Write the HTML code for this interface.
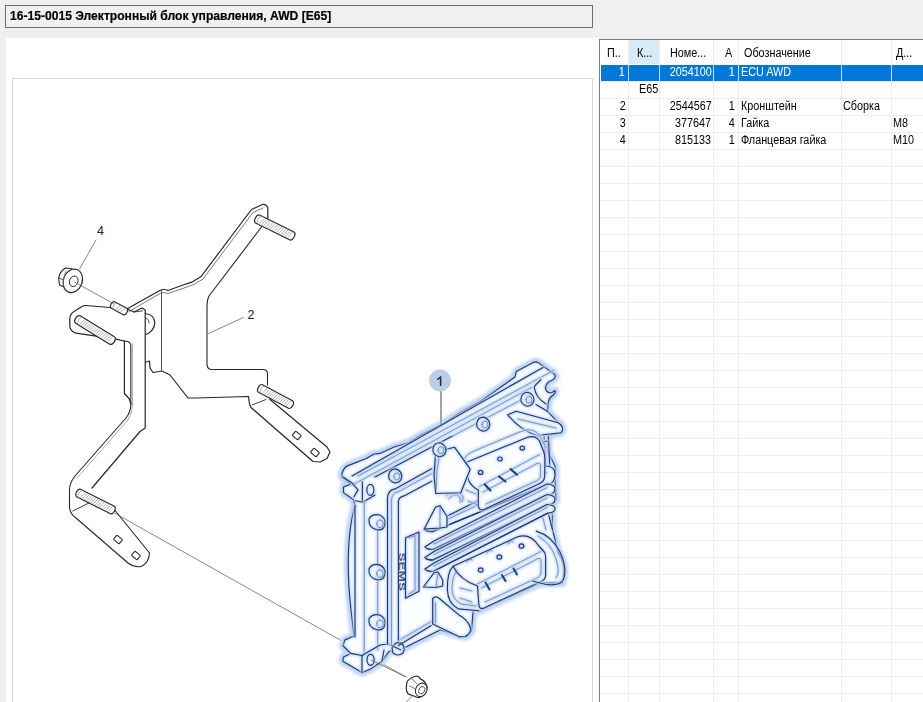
<!DOCTYPE html>
<html><head><meta charset="utf-8">
<style>
html,body{margin:0;padding:0;}
body{width:923px;height:702px;overflow:hidden;background:#f0f0f0;position:relative;font-family:"Liberation Sans",sans-serif;}
.abs{position:absolute;}
#title{left:5px;top:5px;width:582px;height:21px;border:1px solid #6e6e6e;background:#f0f0f0;font-weight:bold;font-size:12.5px;line-height:20.5px;padding-left:4px;-webkit-text-stroke:0.2px #000;color:#000;white-space:nowrap;}
#left{left:6px;top:38px;width:593px;height:664px;background:#fff;}
#inner{left:12px;top:78px;width:579px;height:630px;border:1px solid #d8d8d8;background:#fff;}
#grid{left:599px;top:39px;width:330px;height:670px;background:#fff;border-left:1px solid #7c7c7c;border-top:1px solid #7c7c7c;}
svg{position:absolute;left:0;top:0;}
.t{position:absolute;font-size:12px;color:#000;white-space:nowrap;transform:scaleX(0.9);}
</style></head><body>
<div id="title" class="abs"><span style="display:inline-block;transform:scaleX(0.968);transform-origin:0 50%;">16-15-0015 Электронный блок управления, AWD [E65]</span></div>
<div id="left" class="abs"></div>
<div id="inner" class="abs"></div>
<div id="grid" class="abs"></div>
<svg width="923" height="702" viewBox="0 0 923 702">
<rect x="629" y="40" width="30" height="24" fill="#d9ebf9"/>
<rect x="601" y="65" width="322" height="16" fill="#0078d7"/>
<g stroke="#ededed" stroke-width="1" shape-rendering="crispEdges">
<line x1="628.5" y1="40" x2="628.5" y2="702" />
<line x1="659.5" y1="40" x2="659.5" y2="702" />
<line x1="713.5" y1="40" x2="713.5" y2="702" />
<line x1="738.5" y1="40" x2="738.5" y2="702" />
<line x1="841.5" y1="40" x2="841.5" y2="702" />
<line x1="891.5" y1="40" x2="891.5" y2="702" />
<line x1="600" y1="81.5" x2="923" y2="81.5" />
<line x1="600" y1="98.5" x2="923" y2="98.5" />
<line x1="600" y1="115.5" x2="923" y2="115.5" />
<line x1="600" y1="132.5" x2="923" y2="132.5" />
<line x1="600" y1="149.5" x2="923" y2="149.5" />
<line x1="600" y1="166.5" x2="923" y2="166.5" />
<line x1="600" y1="183.5" x2="923" y2="183.5" />
<line x1="600" y1="200.5" x2="923" y2="200.5" />
<line x1="600" y1="217.5" x2="923" y2="217.5" />
<line x1="600" y1="234.5" x2="923" y2="234.5" />
<line x1="600" y1="251.5" x2="923" y2="251.5" />
<line x1="600" y1="268.5" x2="923" y2="268.5" />
<line x1="600" y1="285.5" x2="923" y2="285.5" />
<line x1="600" y1="302.5" x2="923" y2="302.5" />
<line x1="600" y1="319.5" x2="923" y2="319.5" />
<line x1="600" y1="336.5" x2="923" y2="336.5" />
<line x1="600" y1="353.5" x2="923" y2="353.5" />
<line x1="600" y1="370.5" x2="923" y2="370.5" />
<line x1="600" y1="387.5" x2="923" y2="387.5" />
<line x1="600" y1="404.5" x2="923" y2="404.5" />
<line x1="600" y1="421.5" x2="923" y2="421.5" />
<line x1="600" y1="438.5" x2="923" y2="438.5" />
<line x1="600" y1="455.5" x2="923" y2="455.5" />
<line x1="600" y1="472.5" x2="923" y2="472.5" />
<line x1="600" y1="489.5" x2="923" y2="489.5" />
<line x1="600" y1="506.5" x2="923" y2="506.5" />
<line x1="600" y1="523.5" x2="923" y2="523.5" />
<line x1="600" y1="540.5" x2="923" y2="540.5" />
<line x1="600" y1="557.5" x2="923" y2="557.5" />
<line x1="600" y1="574.5" x2="923" y2="574.5" />
<line x1="600" y1="591.5" x2="923" y2="591.5" />
<line x1="600" y1="608.5" x2="923" y2="608.5" />
<line x1="600" y1="625.5" x2="923" y2="625.5" />
<line x1="600" y1="642.5" x2="923" y2="642.5" />
<line x1="600" y1="659.5" x2="923" y2="659.5" />
<line x1="600" y1="676.5" x2="923" y2="676.5" />
<line x1="600" y1="693.5" x2="923" y2="693.5" />
</g>
<g stroke="#bfe0fb" stroke-width="1" shape-rendering="crispEdges">
<line x1="628.5" y1="65" x2="628.5" y2="81"/>
<line x1="659.5" y1="65" x2="659.5" y2="81"/>
<line x1="713.5" y1="65" x2="713.5" y2="81"/>
<line x1="738.5" y1="65" x2="738.5" y2="81"/>
<line x1="841.5" y1="65" x2="841.5" y2="81"/>
<line x1="891.5" y1="65" x2="891.5" y2="81"/>
</g>
<path d="M127,309 L140,301.5 L160,290.5 Q164,288.5 168,290.5 L183,285 Q188,283 192.6,281.8 L201.2,276.4 L251.5,209.5 L262.5,204.5 Q266,203.5 267.8,207.5 L267.8,219" stroke="#262626" stroke-width="1.2" fill="none" stroke-linejoin="round" stroke-linecap="round" />
<path d="M129,311.5 L141,304.5 L160,293.5 Q164,291.5 168,293.5 L184,288 Q189,286 194,284.5 L203,279 L253,212.5 L263,208" stroke="#555" stroke-width="0.8" fill="none" stroke-linejoin="round" stroke-linecap="round" />
<path d="M263,225 L209,296 Q207,300 207,305 L207,364 Q207,369.5 212,369.5 L263,369.5 Q267.5,369.5 267.5,374 L267.5,385" stroke="#262626" stroke-width="1.1" fill="none" stroke-linejoin="round" stroke-linecap="round" />
<path d="M267.5,394.0 L270.0,399.5 L327.0,447.0 L330.0,452.0 L327.0,458.5 L320.0,462.0 L313.0,461.5 L251.0,407.5 L249.5,404.0 L248.5,396.5 L196.0,398.0 L188.0,398.0 L170.0,375.0 L162.0,371.0 L153.0,372.5 L150.0,368.0 L149.5,361.0 L146.0,362.0" stroke="#262626" stroke-width="1.2100000000000002" fill="none" stroke-linejoin="round" stroke-linecap="round" />
<path d="M252.0,405.0 L266.0,399.5" stroke="#262626" stroke-width="0.9" fill="none" stroke-linejoin="round" stroke-linecap="round" />
<path d="M161.5,290.0 L161.5,371.0" stroke="#444" stroke-width="0.9" fill="none" stroke-linejoin="round" stroke-linecap="round" />
<rect x="293.09999999999997" y="432.7" width="7.2" height="5.6" rx="0.8" transform="rotate(40 296.7 435.5)" stroke="#262626" stroke-width="1.1" fill="#fff"/>
<rect x="311.4" y="449.7" width="7.2" height="5.6" rx="0.8" transform="rotate(40 315 452.5)" stroke="#262626" stroke-width="1.1" fill="#fff"/>
<path d="M124,341 L114.8,338.9 L94.6,335.9 L76,333.2 Q70,331 69.8,326 L69.8,318 Q70.5,313.5 74,311.5 L82,306.5 Q84,305.4 86,305.5 L127,309 L134,312 L142,308 L145.2,310 L145.2,428 L140,431.5 L92,488" stroke="#262626" stroke-width="1.2" fill="none" stroke-linejoin="round" stroke-linecap="round" />
<path d="M134.0,312.0 L142.5,311.0" stroke="#262626" stroke-width="0.8" fill="none" stroke-linejoin="round" stroke-linecap="round" />
<path d="M124.4,341.0 L124.4,393.5 L129.0,398.5 L131.0,404.0" stroke="#262626" stroke-width="1.2100000000000002" fill="none" stroke-linejoin="round" stroke-linecap="round" />
<path d="M124,341 L128,341.5 Q130.5,342.5 130.8,345 L130.8,404 Q130.8,412 126,418 L75,476 Q69.5,483 69.5,490 L69.5,507 Q70,514 76,518 L128,563 Q134,567.5 141,566.5 Q149,563 149.5,553 L114.7,510" stroke="#262626" stroke-width="1.1" fill="none" stroke-linejoin="round" stroke-linecap="round" />
<path d="M132.5,344 L132.5,405 Q132.5,413 128,420 L77,478" stroke="#888" stroke-width="0.7" fill="none" stroke-linejoin="round" stroke-linecap="round" />
<path d="M72.8,511.0 L89.0,503.0" stroke="#262626" stroke-width="0.9" fill="none" stroke-linejoin="round" stroke-linecap="round" />
<path d="M145.5,313.5 Q154.5,315 154.8,322.5 Q154.5,331 146,334.5" stroke="#262626" stroke-width="1.2" fill="none" stroke-linejoin="round" stroke-linecap="round" />
<path d="M145.5,318 Q149,318.5 149,323" stroke="#262626" stroke-width="0.8" fill="none" stroke-linejoin="round" stroke-linecap="round" />
<rect x="114.4" y="536.7" width="7.2" height="5.6" rx="0.8" transform="rotate(40 118 539.5)" stroke="#262626" stroke-width="1.1" fill="#fff"/>
<rect x="132.4" y="552.7" width="7.2" height="5.6" rx="0.8" transform="rotate(40 136 555.5)" stroke="#262626" stroke-width="1.1" fill="#fff"/>
<path d="M255.5,223.0 L290.0,240.0 A2.7,4.5 26.2 0 0 294.0,232.0 L259.5,215.0 A2.7,4.5 26.2 0 0 255.5,223.0 Z" stroke="#2a2a2a" stroke-width="1.2" fill="#fff" stroke-linejoin="round" stroke-linecap="round" />
<path d="M258.4,224.5 A2.7,4.5 26.2 0 1 262.4,216.4" stroke="#888" stroke-width="0.7" fill="none" stroke-linejoin="round" stroke-linecap="round" />
<line x1="259.4" y1="223.7" x2="264.2" y2="218.5" stroke="#929292" stroke-width="0.75"/>
<line x1="261.6" y1="224.8" x2="266.4" y2="219.6" stroke="#929292" stroke-width="0.75"/>
<line x1="263.7" y1="225.9" x2="268.5" y2="220.6" stroke="#929292" stroke-width="0.75"/>
<line x1="265.9" y1="226.9" x2="270.7" y2="221.7" stroke="#929292" stroke-width="0.75"/>
<line x1="268.0" y1="228.0" x2="272.8" y2="222.8" stroke="#929292" stroke-width="0.75"/>
<line x1="270.2" y1="229.0" x2="275.0" y2="223.8" stroke="#929292" stroke-width="0.75"/>
<line x1="272.4" y1="230.1" x2="277.1" y2="224.9" stroke="#929292" stroke-width="0.75"/>
<line x1="274.5" y1="231.2" x2="279.3" y2="226.0" stroke="#929292" stroke-width="0.75"/>
<line x1="276.7" y1="232.2" x2="281.5" y2="227.0" stroke="#929292" stroke-width="0.75"/>
<line x1="278.8" y1="233.3" x2="283.6" y2="228.1" stroke="#929292" stroke-width="0.75"/>
<line x1="281.0" y1="234.4" x2="285.8" y2="229.1" stroke="#929292" stroke-width="0.75"/>
<line x1="283.1" y1="235.4" x2="287.9" y2="230.2" stroke="#929292" stroke-width="0.75"/>
<line x1="285.3" y1="236.5" x2="290.1" y2="231.3" stroke="#929292" stroke-width="0.75"/>
<line x1="287.4" y1="237.5" x2="292.2" y2="232.3" stroke="#929292" stroke-width="0.75"/>
<path d="M258.5,392.3 L288.5,408.3 A2.6,4.3 28.1 0 0 292.5,400.7 L262.5,384.7 A2.6,4.3 28.1 0 0 258.5,392.3 Z" stroke="#2a2a2a" stroke-width="1.2" fill="#fff" stroke-linejoin="round" stroke-linecap="round" />
<path d="M261.2,393.8 A2.6,4.3 28.1 0 1 265.3,386.2" stroke="#888" stroke-width="0.7" fill="none" stroke-linejoin="round" stroke-linecap="round" />
<line x1="262.4" y1="393.1" x2="267.2" y2="388.4" stroke="#929292" stroke-width="0.75"/>
<line x1="264.5" y1="394.3" x2="269.3" y2="389.6" stroke="#929292" stroke-width="0.75"/>
<line x1="266.7" y1="395.4" x2="271.5" y2="390.7" stroke="#929292" stroke-width="0.75"/>
<line x1="268.8" y1="396.6" x2="273.6" y2="391.9" stroke="#929292" stroke-width="0.75"/>
<line x1="271.0" y1="397.7" x2="275.7" y2="393.0" stroke="#929292" stroke-width="0.75"/>
<line x1="273.1" y1="398.9" x2="277.9" y2="394.1" stroke="#929292" stroke-width="0.75"/>
<line x1="275.3" y1="400.0" x2="280.0" y2="395.3" stroke="#929292" stroke-width="0.75"/>
<line x1="277.4" y1="401.1" x2="282.2" y2="396.4" stroke="#929292" stroke-width="0.75"/>
<line x1="279.5" y1="402.3" x2="284.3" y2="397.6" stroke="#929292" stroke-width="0.75"/>
<line x1="281.7" y1="403.4" x2="286.5" y2="398.7" stroke="#929292" stroke-width="0.75"/>
<line x1="283.8" y1="404.6" x2="288.6" y2="399.9" stroke="#929292" stroke-width="0.75"/>
<line x1="286.0" y1="405.7" x2="290.7" y2="401.0" stroke="#929292" stroke-width="0.75"/>
<path d="M75.7,323.2 L109.7,344.2 A2.6,4.3 31.7 0 0 114.3,336.8 L80.3,315.8 A2.6,4.3 31.7 0 0 75.7,323.2 Z" stroke="#2a2a2a" stroke-width="1.2" fill="#fff" stroke-linejoin="round" stroke-linecap="round" />
<path d="M78.4,324.8 A2.6,4.3 31.7 0 1 82.9,317.5" stroke="#888" stroke-width="0.7" fill="none" stroke-linejoin="round" stroke-linecap="round" />
<line x1="79.5" y1="324.2" x2="84.5" y2="319.8" stroke="#929292" stroke-width="0.75"/>
<line x1="81.5" y1="325.4" x2="86.5" y2="321.0" stroke="#929292" stroke-width="0.75"/>
<line x1="83.5" y1="326.6" x2="88.5" y2="322.2" stroke="#929292" stroke-width="0.75"/>
<line x1="85.5" y1="327.9" x2="90.5" y2="323.5" stroke="#929292" stroke-width="0.75"/>
<line x1="87.5" y1="329.1" x2="92.5" y2="324.7" stroke="#929292" stroke-width="0.75"/>
<line x1="89.5" y1="330.3" x2="94.5" y2="325.9" stroke="#929292" stroke-width="0.75"/>
<line x1="91.5" y1="331.6" x2="96.5" y2="327.2" stroke="#929292" stroke-width="0.75"/>
<line x1="93.5" y1="332.8" x2="98.5" y2="328.4" stroke="#929292" stroke-width="0.75"/>
<line x1="95.5" y1="334.1" x2="100.5" y2="329.7" stroke="#929292" stroke-width="0.75"/>
<line x1="97.5" y1="335.3" x2="102.5" y2="330.9" stroke="#929292" stroke-width="0.75"/>
<line x1="99.5" y1="336.5" x2="104.5" y2="332.1" stroke="#929292" stroke-width="0.75"/>
<line x1="101.5" y1="337.8" x2="106.5" y2="333.4" stroke="#929292" stroke-width="0.75"/>
<line x1="103.5" y1="339.0" x2="108.5" y2="334.6" stroke="#929292" stroke-width="0.75"/>
<line x1="105.5" y1="340.2" x2="110.5" y2="335.8" stroke="#929292" stroke-width="0.75"/>
<line x1="107.5" y1="341.5" x2="112.5" y2="337.1" stroke="#929292" stroke-width="0.75"/>
<path d="M76.6,496.8 L110.6,513.8 A2.6,4.3 26.6 0 0 114.4,506.2 L80.4,489.2 A2.6,4.3 26.6 0 0 76.6,496.8 Z" stroke="#2a2a2a" stroke-width="1.2" fill="#fff" stroke-linejoin="round" stroke-linecap="round" />
<path d="M79.3,498.2 A2.6,4.3 26.6 0 1 83.2,490.5" stroke="#888" stroke-width="0.7" fill="none" stroke-linejoin="round" stroke-linecap="round" />
<line x1="80.4" y1="497.5" x2="85.1" y2="492.7" stroke="#929292" stroke-width="0.75"/>
<line x1="82.5" y1="498.6" x2="87.2" y2="493.8" stroke="#929292" stroke-width="0.75"/>
<line x1="84.7" y1="499.7" x2="89.3" y2="494.8" stroke="#929292" stroke-width="0.75"/>
<line x1="86.8" y1="500.7" x2="91.5" y2="495.9" stroke="#929292" stroke-width="0.75"/>
<line x1="88.9" y1="501.8" x2="93.6" y2="497.0" stroke="#929292" stroke-width="0.75"/>
<line x1="91.0" y1="502.9" x2="95.7" y2="498.0" stroke="#929292" stroke-width="0.75"/>
<line x1="93.2" y1="503.9" x2="97.8" y2="499.1" stroke="#929292" stroke-width="0.75"/>
<line x1="95.3" y1="505.0" x2="100.0" y2="500.1" stroke="#929292" stroke-width="0.75"/>
<line x1="97.4" y1="506.0" x2="102.1" y2="501.2" stroke="#929292" stroke-width="0.75"/>
<line x1="99.5" y1="507.1" x2="104.2" y2="502.3" stroke="#929292" stroke-width="0.75"/>
<line x1="101.7" y1="508.2" x2="106.3" y2="503.3" stroke="#929292" stroke-width="0.75"/>
<line x1="103.8" y1="509.2" x2="108.5" y2="504.4" stroke="#929292" stroke-width="0.75"/>
<line x1="105.9" y1="510.3" x2="110.6" y2="505.5" stroke="#929292" stroke-width="0.75"/>
<line x1="108.0" y1="511.4" x2="112.7" y2="506.5" stroke="#929292" stroke-width="0.75"/>
<path d="M111.3,308.2 L123.3,314.7 A2.2,3.6 28.4 0 0 126.7,308.3 L114.7,301.8 A2.2,3.6 28.4 0 0 111.3,308.2 Z" stroke="#2a2a2a" stroke-width="1.2" fill="#fff" stroke-linejoin="round" stroke-linecap="round" />
<path d="M113.6,309.4 A2.2,3.6 28.4 0 1 117.0,303.1" stroke="#888" stroke-width="0.7" fill="none" stroke-linejoin="round" stroke-linecap="round" />
<line x1="115.7" y1="309.3" x2="119.9" y2="305.9" stroke="#929292" stroke-width="0.75"/>
<line x1="118.1" y1="310.6" x2="122.3" y2="307.2" stroke="#929292" stroke-width="0.75"/>
<line x1="120.5" y1="311.9" x2="124.7" y2="308.5" stroke="#929292" stroke-width="0.75"/>
<path d="M72,268.8 L65.5,268 Q60,271 58.7,278 L59.5,285 L63,286.5" stroke="#262626" stroke-width="1.1" fill="#fff" stroke-linejoin="round" stroke-linecap="round" />
<path d="M58.7,278.0 L64.0,280.0" stroke="#262626" stroke-width="0.8" fill="none" stroke-linejoin="round" stroke-linecap="round" />
<ellipse cx="72.8" cy="280.8" rx="9.4" ry="12" transform="rotate(20 72.8 280.8)" stroke="#2a2a2a" stroke-width="1.2" fill="#fff"/>
<ellipse cx="73.7" cy="281.3" rx="4.2" ry="5.4" transform="rotate(20 73.7 281.3)" stroke="#2a2a2a" stroke-width="0.9" fill="none"/>
<path d="M66,271 Q62,279 64,288" stroke="#666" stroke-width="0.7" fill="none" stroke-linejoin="round" stroke-linecap="round" />
<path d="M74.5,282.0 L114.0,304.0" stroke="#555" stroke-width="0.7" fill="none" stroke-linejoin="round" stroke-linecap="round" />
<path d="M79.5,269.0 L96.0,240.0" stroke="#555" stroke-width="0.7" fill="none" stroke-linejoin="round" stroke-linecap="round" />
<path d="M208.5,333.5 L243.5,317.5" stroke="#555" stroke-width="0.7" fill="none" stroke-linejoin="round" stroke-linecap="round" />
<path d="M113.5,512.5 L406.0,677.0" stroke="#555" stroke-width="0.7" fill="none" stroke-linejoin="round" stroke-linecap="round" />
<path d="M441.0,391.0 L441.0,425.0" stroke="#555" stroke-width="0.7" fill="none" stroke-linejoin="round" stroke-linecap="round" />
<text x="100.5" y="235" font-size="12.5" text-anchor="middle" fill="#222" font-family="Liberation Sans">4</text>
<text x="251" y="318.5" font-size="12.5" text-anchor="middle" fill="#222" font-family="Liberation Sans">2</text>
<filter id="glw" x="-20%" y="-20%" width="140%" height="140%"><feGaussianBlur stdDeviation="1.6"/></filter>
<filter id="glw2" x="-20%" y="-20%" width="140%" height="140%"><feGaussianBlur stdDeviation="0.8"/></filter>
<path d="M342,477 L342,473.5 Q344,467 348,465.6 L366.3,458.5 L373.5,454.2 L380,453.4 L394.2,447 L408.5,442.7 L422.7,434.1 L441.3,424.9 L460,412.7 L480,401.4 L492.8,392.8 L514.9,377 L516.3,371.4 L534.1,362.1 L537.7,362.1 L554.8,374.5 Q556.5,377 553,379.8 L548.5,382 Q543.5,386.5 546.6,391 Q549,393.5 552,392.5 L555,390.5 Q556.5,393 551.3,396.5 Q548,399.5 547.9,406.3 L547.5,411.3 L558.3,422.7 Q565,427 561.2,432.7 L548,435.5 L548,452 L555,466 Q556,472 555,478 L556,500 L552,506 L552.6,530 L558.5,553.3 Q567,566 562.2,583 L540,583 L478.9,610.7 L473.3,608.9 L471.5,631 L466,636.7 L456.7,634.8 L440,630 L400.5,649.8 L389.1,651.3 L382,661.2 L370.6,669 L362,672.6 L342.8,661.2 L343.5,657 L350.7,653.4 L342.8,645.6 L345,639.9 L354,636 L351,610 Q345,556 352,518 L355,505.5 L353.5,499.8 L343.5,492.6 L343.5,487 L350.7,484.1 Z" fill="#fff" stroke="#bcd4f4" stroke-width="8" stroke-linejoin="round" filter="url(#glw)"/>
<path d="M342,477 L342,473.5 Q344,467 348,465.6 L366.3,458.5 L373.5,454.2 L380,453.4 L394.2,447 L408.5,442.7 L422.7,434.1 L441.3,424.9 L460,412.7 L480,401.4 L492.8,392.8 L514.9,377 L516.3,371.4 L534.1,362.1 L537.7,362.1 L554.8,374.5 Q556.5,377 553,379.8 L548.5,382 Q543.5,386.5 546.6,391 Q549,393.5 552,392.5 L555,390.5 Q556.5,393 551.3,396.5 Q548,399.5 547.9,406.3 L547.5,411.3 L558.3,422.7 Q565,427 561.2,432.7 L548,435.5 L548,452 L555,466 Q556,472 555,478 L556,500 L552,506 L552.6,530 L558.5,553.3 Q567,566 562.2,583 L540,583 L478.9,610.7 L473.3,608.9 L471.5,631 L466,636.7 L456.7,634.8 L440,630 L400.5,649.8 L389.1,651.3 L382,661.2 L370.6,669 L362,672.6 L342.8,661.2 L343.5,657 L350.7,653.4 L342.8,645.6 L345,639.9 L354,636 L351,610 Q345,556 352,518 L355,505.5 L353.5,499.8 L343.5,492.6 L343.5,487 L350.7,484.1 Z" fill="#fff" stroke="none"/>
<g stroke-linejoin="round" stroke-linecap="round"><path d="M342,477 L342,473.5 Q344,467 348,465.6 L366.3,458.5 L373.5,454.2 L380,453.4 L394.2,447 L408.5,442.7 L422.7,434.1 L441.3,424.9 L460,412.7 L480,401.4 L492.8,392.8 L514.9,377 L516.3,371.4 L534.1,362.1 L537.7,362.1 L554.8,374.5 Q556.5,377 553,379.8 L548.5,382 Q543.5,386.5 546.6,391 Q549,393.5 552,392.5 L555,390.5 Q556.5,393 551.3,396.5 Q548,399.5 547.9,406.3 L547.5,411.3 L558.3,422.7 Q565,427 561.2,432.7 L548,435.5 L548,452 L555,466 Q556,472 555,478 L556,500 L552,506 L552.6,530 L558.5,553.3 Q567,566 562.2,583 L540,583 L478.9,610.7 L473.3,608.9 L471.5,631 L466,636.7 L456.7,634.8 L440,630 L400.5,649.8 L389.1,651.3 L382,661.2 L370.6,669 L362,672.6 L342.8,661.2 L343.5,657 L350.7,653.4 L342.8,645.6 L345,639.9 L354,636 L351,610 Q345,556 352,518 L355,505.5 L353.5,499.8 L343.5,492.6 L343.5,487 L350.7,484.1 Z" fill="#fbfdff" stroke="none"/><g filter="url(#glw2)"><path d="M342,477 L342,473.5 Q344,467 348,465.6 L366.3,458.5 L373.5,454.2 L380,453.4 L394.2,447 L408.5,442.7 L422.7,434.1 L441.3,424.9 L460,412.7 L480,401.4 L492.8,392.8 L514.9,377 L516.3,371.4 L534.1,362.1 L537.7,362.1 L554.8,374.5 Q556.5,377 553,379.8 L548.5,382 Q543.5,386.5 546.6,391 Q549,393.5 552,392.5 L555,390.5 Q556.5,393 551.3,396.5 Q548,399.5 547.9,406.3 L547.5,411.3 L558.3,422.7 Q565,427 561.2,432.7 L548,435.5 L548,452 L555,466 Q556,472 555,478 L556,500 L552,506 L552.6,530 L558.5,553.3 Q567,566 562.2,583 L540,583 L478.9,610.7 L473.3,608.9 L471.5,631 L466,636.7 L456.7,634.8 L440,630 L400.5,649.8 L389.1,651.3 L382,661.2 L370.6,669 L362,672.6 L342.8,661.2 L343.5,657 L350.7,653.4 L342.8,645.6 L345,639.9 L354,636 L351,610 Q345,556 352,518 L355,505.5 L353.5,499.8 L343.5,492.6 L343.5,487 L350.7,484.1 Z" fill="none" stroke="#c2d8f5" stroke-width="3.4"/></g><path d="M342,477 L342,473.5 Q344,467 348,465.6 L366.3,458.5 L373.5,454.2 L380,453.4 L394.2,447 L408.5,442.7 L422.7,434.1 L441.3,424.9 L460,412.7 L480,401.4 L492.8,392.8 L514.9,377 L516.3,371.4 L534.1,362.1 L537.7,362.1 L554.8,374.5 Q556.5,377 553,379.8 L548.5,382 Q543.5,386.5 546.6,391 Q549,393.5 552,392.5 L555,390.5 Q556.5,393 551.3,396.5 Q548,399.5 547.9,406.3 L547.5,411.3 L558.3,422.7 Q565,427 561.2,432.7 L548,435.5 L548,452 L555,466 Q556,472 555,478 L556,500 L552,506 L552.6,530 L558.5,553.3 Q567,566 562.2,583 L540,583 L478.9,610.7 L473.3,608.9 L471.5,631 L466,636.7 L456.7,634.8 L440,630 L400.5,649.8 L389.1,651.3 L382,661.2 L370.6,669 L362,672.6 L342.8,661.2 L343.5,657 L350.7,653.4 L342.8,645.6 L345,639.9 L354,636 L351,610 Q345,556 352,518 L355,505.5 L353.5,499.8 L343.5,492.6 L343.5,487 L350.7,484.1 Z" fill="none" stroke="#22386e" stroke-width="1.15"/></g>
<g stroke-linejoin="round" stroke-linecap="round"><path d="M366.9,489.9 A3.5,5.5 0 1 1 373.9,489.9 A3.5,5.5 0 1 1 366.9,489.9 Z" fill="#fbfdff" stroke="none"/><g filter="url(#glw2)"><path d="M352.0,475.9 L543.0,367.4" fill="none" stroke="#c2d8f5" stroke-width="3.4"/><path d="M375.0,476.9 L452.0,436.3" fill="none" stroke="#c2d8f5" stroke-width="3.4"/><path d="M343.0,476.9 L352.0,482.9 L358.0,489.9 L354.0,496.8" fill="none" stroke="#c2d8f5" stroke-width="3.4"/><path d="M362.4,481.9 L362.4,501.8" fill="none" stroke="#c2d8f5" stroke-width="3.4"/><path d="M355.4,500.8 L362.9,502.3 L375.0,495.0" fill="none" stroke="#c2d8f5" stroke-width="3.4"/><path d="M366.9,489.9 A3.5,5.5 0 1 1 373.9,489.9 A3.5,5.5 0 1 1 366.9,489.9 Z" fill="none" stroke="#c2d8f5" stroke-width="3.4"/><path d="M358.0,476.1 L554.0,370.2" fill="none" stroke="#c2d8f5" stroke-width="3.4"/><path d="M352.0,485.2 L532.0,387.2" fill="none" stroke="#c2d8f5" stroke-width="3.4"/><path d="M452.0,436.3 L520.0,400.5" fill="none" stroke="#c2d8f5" stroke-width="3.4"/></g><path d="M352.0,475.9 L543.0,367.4" fill="none" stroke="#22386e" stroke-width="1.15"/><path d="M375.0,476.9 L452.0,436.3" fill="none" stroke="#22386e" stroke-width="1.15"/><path d="M343.0,476.9 L352.0,482.9 L358.0,489.9 L354.0,496.8" fill="none" stroke="#22386e" stroke-width="1.15"/><path d="M362.4,481.9 L362.4,501.8" fill="none" stroke="#22386e" stroke-width="1.15"/><path d="M355.4,500.8 L362.9,502.3 L375.0,495.0" fill="none" stroke="#22386e" stroke-width="1.15"/><path d="M366.9,489.9 A3.5,5.5 0 1 1 373.9,489.9 A3.5,5.5 0 1 1 366.9,489.9 Z" fill="none" stroke="#22386e" stroke-width="1.15"/><path d="M358.0,476.1 L554.0,370.2" fill="none" stroke="#5a76b0" stroke-width="0.7"/><path d="M352.0,485.2 L532.0,387.2" fill="none" stroke="#5a76b0" stroke-width="0.7"/><path d="M452.0,436.3 L520.0,400.5" fill="none" stroke="#5a76b0" stroke-width="0.7"/></g>
<g stroke-linejoin="round" stroke-linecap="round"><path d="M369,518.8 Q372,513.8 379,514.8 Q386,517.8 385,523.8 Q384,530.8 377,529.8 Q368,527.8 369,518.8 Z" fill="#fbfdff" stroke="none"/><path d="M369,568.6 Q372,563.6 379,564.6 Q386,567.6 385,573.6 Q384,580.6 377,579.6 Q368,577.6 369,568.6 Z" fill="#fbfdff" stroke="none"/><path d="M369,618.8 Q372,613.8 379,614.8 Q386,617.8 385,623.8 Q384,630.8 377,629.8 Q368,627.8 369,618.8 Z" fill="#fbfdff" stroke="none"/><g filter="url(#glw2)"><path d="M355.0,505.5 L355.0,637.0" fill="none" stroke="#c2d8f5" stroke-width="3.4"/><path d="M369,518.8 Q372,513.8 379,514.8 Q386,517.8 385,523.8 Q384,530.8 377,529.8 Q368,527.8 369,518.8 Z" fill="none" stroke="#c2d8f5" stroke-width="3.4"/><path d="M369,568.6 Q372,563.6 379,564.6 Q386,567.6 385,573.6 Q384,580.6 377,579.6 Q368,577.6 369,568.6 Z" fill="none" stroke="#c2d8f5" stroke-width="3.4"/><path d="M369,618.8 Q372,613.8 379,614.8 Q386,617.8 385,623.8 Q384,630.8 377,629.8 Q368,627.8 369,618.8 Z" fill="none" stroke="#c2d8f5" stroke-width="3.4"/><path d="M364.2,502.0 L364.2,655.0" fill="none" stroke="#c2d8f5" stroke-width="3.4"/><path d="M377.7,530.0 L377.7,566.0" fill="none" stroke="#c2d8f5" stroke-width="3.4"/><path d="M377.7,580.0 L377.7,616.0" fill="none" stroke="#c2d8f5" stroke-width="3.4"/><path d="M377.7,630.0 L377.7,650.0" fill="none" stroke="#c2d8f5" stroke-width="3.4"/><path d="M376.8,523.8 A3.2,3.8 0 1 1 383.2,523.8 A3.2,3.8 0 1 1 376.8,523.8 Z" fill="none" stroke="#c2d8f5" stroke-width="3.4"/><path d="M376.8,573.6 A3.2,3.8 0 1 1 383.2,573.6 A3.2,3.8 0 1 1 376.8,573.6 Z" fill="none" stroke="#c2d8f5" stroke-width="3.4"/><path d="M376.8,623.8 A3.2,3.8 0 1 1 383.2,623.8 A3.2,3.8 0 1 1 376.8,623.8 Z" fill="none" stroke="#c2d8f5" stroke-width="3.4"/></g><path d="M355.0,505.5 L355.0,637.0" fill="none" stroke="#22386e" stroke-width="1.15"/><path d="M369,518.8 Q372,513.8 379,514.8 Q386,517.8 385,523.8 Q384,530.8 377,529.8 Q368,527.8 369,518.8 Z" fill="none" stroke="#22386e" stroke-width="1.15"/><path d="M369,568.6 Q372,563.6 379,564.6 Q386,567.6 385,573.6 Q384,580.6 377,579.6 Q368,577.6 369,568.6 Z" fill="none" stroke="#22386e" stroke-width="1.15"/><path d="M369,618.8 Q372,613.8 379,614.8 Q386,617.8 385,623.8 Q384,630.8 377,629.8 Q368,627.8 369,618.8 Z" fill="none" stroke="#22386e" stroke-width="1.15"/><path d="M364.2,502.0 L364.2,655.0" fill="none" stroke="#5a76b0" stroke-width="0.7"/><path d="M377.7,530.0 L377.7,566.0" fill="none" stroke="#5a76b0" stroke-width="0.7"/><path d="M377.7,580.0 L377.7,616.0" fill="none" stroke="#5a76b0" stroke-width="0.7"/><path d="M377.7,630.0 L377.7,650.0" fill="none" stroke="#5a76b0" stroke-width="0.7"/><path d="M376.8,523.8 A3.2,3.8 0 1 1 383.2,523.8 A3.2,3.8 0 1 1 376.8,523.8 Z" fill="none" stroke="#5a76b0" stroke-width="0.7"/><path d="M376.8,573.6 A3.2,3.8 0 1 1 383.2,573.6 A3.2,3.8 0 1 1 376.8,573.6 Z" fill="none" stroke="#5a76b0" stroke-width="0.7"/><path d="M376.8,623.8 A3.2,3.8 0 1 1 383.2,623.8 A3.2,3.8 0 1 1 376.8,623.8 Z" fill="none" stroke="#5a76b0" stroke-width="0.7"/></g>
<g stroke-linejoin="round" stroke-linecap="round"><path d="M367.0,659.8 A3.6,5.5 0 1 1 374.2,659.8 A3.6,5.5 0 1 1 367.0,659.8 Z" fill="#fbfdff" stroke="none"/><path d="M392,648 Q395,641 401,643 Q406,647 403,653 Q398,657 393,653 Z" fill="#fbfdff" stroke="none"/><g filter="url(#glw2)"><path d="M342.8,645.6 L350.7,653.4 L362.0,655.5 L362.0,672.6" fill="none" stroke="#c2d8f5" stroke-width="3.4"/><path d="M362.0,655.5 L380.0,645.0 L388.4,644.0" fill="none" stroke="#c2d8f5" stroke-width="3.4"/><path d="M367.0,659.8 A3.6,5.5 0 1 1 374.2,659.8 A3.6,5.5 0 1 1 367.0,659.8 Z" fill="none" stroke="#c2d8f5" stroke-width="3.4"/><path d="M388.4,644.0 L400.5,649.8" fill="none" stroke="#c2d8f5" stroke-width="3.4"/><path d="M398.5,645.5 L431.3,625.5" fill="none" stroke="#c2d8f5" stroke-width="3.4"/><path d="M392,648 Q395,641 401,643 Q406,647 403,653 Q398,657 393,653 Z" fill="none" stroke="#c2d8f5" stroke-width="3.4"/><path d="M382.0,661.2 L384.0,650.0" fill="none" stroke="#c2d8f5" stroke-width="3.4"/><path d="M397.7,641.0 L432.0,621.0" fill="none" stroke="#c2d8f5" stroke-width="3.4"/></g><path d="M342.8,645.6 L350.7,653.4 L362.0,655.5 L362.0,672.6" fill="none" stroke="#22386e" stroke-width="1.15"/><path d="M362.0,655.5 L380.0,645.0 L388.4,644.0" fill="none" stroke="#22386e" stroke-width="1.15"/><path d="M367.0,659.8 A3.6,5.5 0 1 1 374.2,659.8 A3.6,5.5 0 1 1 367.0,659.8 Z" fill="none" stroke="#22386e" stroke-width="1.15"/><path d="M388.4,644.0 L400.5,649.8" fill="none" stroke="#22386e" stroke-width="1.15"/><path d="M398.5,645.5 L431.3,625.5" fill="none" stroke="#22386e" stroke-width="1.15"/><path d="M392,648 Q395,641 401,643 Q406,647 403,653 Q398,657 393,653 Z" fill="none" stroke="#22386e" stroke-width="1.15"/><path d="M382.0,661.2 L384.0,650.0" fill="none" stroke="#22386e" stroke-width="1.15"/><path d="M397.7,641.0 L432.0,621.0" fill="none" stroke="#5a76b0" stroke-width="0.7"/></g>
<g stroke-linejoin="round" stroke-linecap="round"><g filter="url(#glw2)"><path d="M544.0,436.0 L545.5,468.0" fill="none" stroke="#c2d8f5" stroke-width="3.4"/><path d="M548.4,436.0 L549.8,468.0" fill="none" stroke="#c2d8f5" stroke-width="3.4"/><path d="M547.0,508.3 L552.6,530.0" fill="none" stroke="#c2d8f5" stroke-width="3.4"/><path d="M535.9,404.6 L547.9,411.4" fill="none" stroke="#c2d8f5" stroke-width="3.4"/><path d="M541,379.8 Q534,386 534.2,387.5 Q536,398 546,404" fill="none" stroke="#c2d8f5" stroke-width="3.4"/><path d="M541.0,510.0 L546.0,530.0" fill="none" stroke="#c2d8f5" stroke-width="3.4"/></g><path d="M544.0,436.0 L545.5,468.0" fill="none" stroke="#22386e" stroke-width="1.15"/><path d="M548.4,436.0 L549.8,468.0" fill="none" stroke="#22386e" stroke-width="1.15"/><path d="M547.0,508.3 L552.6,530.0" fill="none" stroke="#22386e" stroke-width="1.15"/><path d="M535.9,404.6 L547.9,411.4" fill="none" stroke="#22386e" stroke-width="1.15"/><path d="M541,379.8 Q534,386 534.2,387.5 Q536,398 546,404" fill="none" stroke="#22386e" stroke-width="1.15"/><path d="M541.0,510.0 L546.0,530.0" fill="none" stroke="#5a76b0" stroke-width="0.7"/></g>
<g stroke-linejoin="round" stroke-linecap="round"><path d="M507.7,414.8 L516.3,411.3 L558.3,422.7 Q565,427 561.2,432.7 L537,435.5 Q520,430 507.7,414.8 Z" fill="#fbfdff" stroke="none"/><g filter="url(#glw2)"><path d="M507.7,414.8 L516.3,411.3 L558.3,422.7 Q565,427 561.2,432.7 L537,435.5 Q520,430 507.7,414.8 Z" fill="none" stroke="#c2d8f5" stroke-width="3.4"/><path d="M537.7,435.5 L537.0,442.6 L547.0,441.2" fill="none" stroke="#c2d8f5" stroke-width="3.4"/><path d="M518.0,419.0 L556.0,428.0" fill="none" stroke="#c2d8f5" stroke-width="3.4"/></g><path d="M507.7,414.8 L516.3,411.3 L558.3,422.7 Q565,427 561.2,432.7 L537,435.5 Q520,430 507.7,414.8 Z" fill="none" stroke="#22386e" stroke-width="1.15"/><path d="M537.7,435.5 L537.0,442.6 L547.0,441.2" fill="none" stroke="#22386e" stroke-width="1.15"/><path d="M518.0,419.0 L556.0,428.0" fill="none" stroke="#5a76b0" stroke-width="0.7"/></g>
<g stroke-linejoin="round" stroke-linecap="round"><path d="M405.5,537.7 L419.0,532.0 L419.0,591.2 L405.5,598.3 Z" fill="#fbfdff" stroke="none"/><g filter="url(#glw2)"><path d="M387.5,644 L387.5,498 Q388,490 395,488.9 L432,468.5" fill="none" stroke="#c2d8f5" stroke-width="3.4"/><path d="M398.4,640 L398.4,501 Q399,497 404,495.9 L432,481" fill="none" stroke="#c2d8f5" stroke-width="3.4"/><path d="M405.5,537.7 L419.0,532.0 L419.0,591.2 L405.5,598.3 Z" fill="none" stroke="#c2d8f5" stroke-width="3.4"/><path d="M391.5,645 L391.5,500 Q392,493 398,491.9 L432,473.5" fill="none" stroke="#c2d8f5" stroke-width="3.4"/><path d="M409.0,538.0 L415.0,535.5 L415.0,590.0 L409.0,594.0" fill="none" stroke="#c2d8f5" stroke-width="3.4"/></g><path d="M387.5,644 L387.5,498 Q388,490 395,488.9 L432,468.5" fill="none" stroke="#22386e" stroke-width="1.15"/><path d="M398.4,640 L398.4,501 Q399,497 404,495.9 L432,481" fill="none" stroke="#22386e" stroke-width="1.15"/><path d="M405.5,537.7 L419.0,532.0 L419.0,591.2 L405.5,598.3 Z" fill="none" stroke="#22386e" stroke-width="1.15"/><path d="M391.5,645 L391.5,500 Q392,493 398,491.9 L432,473.5" fill="none" stroke="#5a76b0" stroke-width="0.7"/><path d="M409.0,538.0 L415.0,535.5 L415.0,590.0 L409.0,594.0" fill="none" stroke="#5a76b0" stroke-width="0.7"/></g>
<g stroke-linejoin="round" stroke-linecap="round"><path d="M424.2,529.1 L433.2,523.1 L547,466 Q555.5,467 555,475.0 Q554.5,484 548,484 L432.2,531.6 Q426.2,531.6 424.2,529.1 Z" fill="#fbfdff" stroke="none"/><g filter="url(#glw2)"><path d="M424.2,529.1 L433.2,523.1 L547,466 Q555.5,467 555,475.0 Q554.5,484 548,484 L432.2,531.6 Q426.2,531.6 424.2,529.1 Z" fill="none" stroke="#c2d8f5" stroke-width="3.4"/><path d="M426.2,530.9 L432.2,531.6 L548,484" fill="none" stroke="#c2d8f5" stroke-width="3.4"/><path d="M433.2,526.1 L547.0,472.3" fill="none" stroke="#c2d8f5" stroke-width="3.4"/></g><path d="M424.2,529.1 L433.2,523.1 L547,466 Q555.5,467 555,475.0 Q554.5,484 548,484 L432.2,531.6 Q426.2,531.6 424.2,529.1 Z" fill="none" stroke="#22386e" stroke-width="1.15"/><path d="M426.2,530.9 L432.2,531.6 L548,484" fill="none" stroke="#22386e" stroke-width="1.15"/><path d="M433.2,526.1 L547.0,472.3" fill="none" stroke="#5a76b0" stroke-width="0.7"/></g>
<g stroke-linejoin="round" stroke-linecap="round"><path d="M424.9,547 L433.9,541 L547,484 Q555.5,485 555,489.25 Q554.5,494.5 548,494.5 L432.9,549.5 Q426.9,549.5 424.9,547 Z" fill="#fbfdff" stroke="none"/><g filter="url(#glw2)"><path d="M424.9,547 L433.9,541 L547,484 Q555.5,485 555,489.25 Q554.5,494.5 548,494.5 L432.9,549.5 Q426.9,549.5 424.9,547 Z" fill="none" stroke="#c2d8f5" stroke-width="3.4"/><path d="M426.9,548.8 L432.9,549.5 L548,494.5" fill="none" stroke="#c2d8f5" stroke-width="3.4"/><path d="M433.9,544.0 L547.0,487.7" fill="none" stroke="#c2d8f5" stroke-width="3.4"/></g><path d="M424.9,547 L433.9,541 L547,484 Q555.5,485 555,489.25 Q554.5,494.5 548,494.5 L432.9,549.5 Q426.9,549.5 424.9,547 Z" fill="none" stroke="#22386e" stroke-width="1.15"/><path d="M426.9,548.8 L432.9,549.5 L548,494.5" fill="none" stroke="#22386e" stroke-width="1.15"/><path d="M433.9,544.0 L547.0,487.7" fill="none" stroke="#5a76b0" stroke-width="0.7"/></g>
<g stroke-linejoin="round" stroke-linecap="round"><path d="M424.9,557.6 L433.9,551.6 L547,494.5 Q555.5,495.5 555,499.5 Q554.5,504.5 548,504.5 L432.9,560.1 Q426.9,560.1 424.9,557.6 Z" fill="#fbfdff" stroke="none"/><g filter="url(#glw2)"><path d="M424.9,557.6 L433.9,551.6 L547,494.5 Q555.5,495.5 555,499.5 Q554.5,504.5 548,504.5 L432.9,560.1 Q426.9,560.1 424.9,557.6 Z" fill="none" stroke="#c2d8f5" stroke-width="3.4"/><path d="M426.9,559.4 L432.9,560.1 L548,504.5" fill="none" stroke="#c2d8f5" stroke-width="3.4"/><path d="M433.9,554.6 L547.0,498.0" fill="none" stroke="#c2d8f5" stroke-width="3.4"/></g><path d="M424.9,557.6 L433.9,551.6 L547,494.5 Q555.5,495.5 555,499.5 Q554.5,504.5 548,504.5 L432.9,560.1 Q426.9,560.1 424.9,557.6 Z" fill="none" stroke="#22386e" stroke-width="1.15"/><path d="M426.9,559.4 L432.9,560.1 L548,504.5" fill="none" stroke="#22386e" stroke-width="1.15"/><path d="M433.9,554.6 L547.0,498.0" fill="none" stroke="#5a76b0" stroke-width="0.7"/></g>
<g stroke-linejoin="round" stroke-linecap="round"><path d="M424.9,569 L433.9,563 L547,504.5 Q555.5,505.5 555,508.75 Q554.5,513 548,513 L432.9,571.5 Q426.9,571.5 424.9,569 Z" fill="#fbfdff" stroke="none"/><g filter="url(#glw2)"><path d="M424.9,569 L433.9,563 L547,504.5 Q555.5,505.5 555,508.75 Q554.5,513 548,513 L432.9,571.5 Q426.9,571.5 424.9,569 Z" fill="none" stroke="#c2d8f5" stroke-width="3.4"/><path d="M426.9,570.8 L432.9,571.5 L548,513" fill="none" stroke="#c2d8f5" stroke-width="3.4"/><path d="M433.9,566.0 L547.0,507.5" fill="none" stroke="#c2d8f5" stroke-width="3.4"/></g><path d="M424.9,569 L433.9,563 L547,504.5 Q555.5,505.5 555,508.75 Q554.5,513 548,513 L432.9,571.5 Q426.9,571.5 424.9,569 Z" fill="none" stroke="#22386e" stroke-width="1.15"/><path d="M426.9,570.8 L432.9,571.5 L548,513" fill="none" stroke="#22386e" stroke-width="1.15"/><path d="M433.9,566.0 L547.0,507.5" fill="none" stroke="#5a76b0" stroke-width="0.7"/></g>
<g stroke-linejoin="round" stroke-linecap="round"><path d="M424.2,529.1 L435.6,507.0 L440.0,505.6 L447.0,516.5 L447.0,527.0 L440.0,528.0 Z" fill="#fbfdff" stroke="none"/><g filter="url(#glw2)"><path d="M424.2,529.1 L435.6,507.0 L440.0,505.6 L447.0,516.5 L447.0,527.0 L440.0,528.0 Z" fill="none" stroke="#c2d8f5" stroke-width="3.4"/><path d="M440.0,505.6 L440.0,528.0" fill="none" stroke="#c2d8f5" stroke-width="3.4"/></g><path d="M424.2,529.1 L435.6,507.0 L440.0,505.6 L447.0,516.5 L447.0,527.0 L440.0,528.0 Z" fill="none" stroke="#22386e" stroke-width="1.15"/><path d="M440.0,505.6 L440.0,528.0" fill="none" stroke="#5a76b0" stroke-width="0.7"/></g>
<g stroke-linejoin="round" stroke-linecap="round"><path d="M423.4,587.0 L434.0,572.8 L438.0,572.0 L442.7,580.0 L442.7,586.0 L436.0,587.5 Z" fill="#fbfdff" stroke="none"/><g filter="url(#glw2)"><path d="M423.4,587.0 L434.0,572.8 L438.0,572.0 L442.7,580.0 L442.7,586.0 L436.0,587.5 Z" fill="none" stroke="#c2d8f5" stroke-width="3.4"/><path d="M438.0,572.0 L436.0,587.5" fill="none" stroke="#c2d8f5" stroke-width="3.4"/></g><path d="M423.4,587.0 L434.0,572.8 L438.0,572.0 L442.7,580.0 L442.7,586.0 L436.0,587.5 Z" fill="none" stroke="#22386e" stroke-width="1.15"/><path d="M438.0,572.0 L436.0,587.5" fill="none" stroke="#5a76b0" stroke-width="0.7"/></g>
<g stroke-linejoin="round" stroke-linecap="round"><path d="M466.5,462.2 L527,437.5 Q535,434.5 539.5,441 L543.8,452 Q545,455 544.9,460 L544.7,476.3 Q544.5,481.5 539.8,483.5 L484,509.5 Q478.5,511 478.2,505 L478.4,490 Q472,487 469,481 Q465,472 466.5,462.2 Z" fill="#fbfdff" stroke="none"/><g filter="url(#glw2)"><path d="M466.5,462.2 L527,437.5 Q535,434.5 539.5,441 L543.8,452 Q545,455 544.9,460 L544.7,476.3 Q544.5,481.5 539.8,483.5 L484,509.5 Q478.5,511 478.2,505 L478.4,490 Q472,487 469,481 Q465,472 466.5,462.2 Z" fill="none" stroke="#c2d8f5" stroke-width="3.4"/><path d="M478.3,472.4 A2.3,2.0 0 1 1 482.9,472.4 A2.3,2.0 0 1 1 478.3,472.4 Z" fill="none" stroke="#c2d8f5" stroke-width="3.4"/><path d="M497.6,459.0 A2.3,2.0 0 1 1 502.2,459.0 A2.3,2.0 0 1 1 497.6,459.0 Z" fill="none" stroke="#c2d8f5" stroke-width="3.4"/><path d="M520.0,448.1 A2.3,2.0 0 1 1 524.6,448.1 A2.3,2.0 0 1 1 520.0,448.1 Z" fill="none" stroke="#c2d8f5" stroke-width="3.4"/><path d="M446,496 Q450,490 458,492 Q466,496 462,502" fill="none" stroke="#c2d8f5" stroke-width="3.4"/><path d="M449,499 Q452,494 457,495 Q462,498 460,502" fill="none" stroke="#c2d8f5" stroke-width="3.4"/><path d="M462,466 Q462,456 474,451 L522,431 Q534,427 540,436 L546,448" fill="none" stroke="#c2d8f5" stroke-width="3.4"/><path d="M479.4,486.5 L539.6,454.5" fill="none" stroke="#c2d8f5" stroke-width="3.4"/><path d="M483,492 L537,463.5 Q540.5,462 540.5,466 L540.5,475.5 Q540.5,479 537,480.5 L486,504" fill="none" stroke="#c2d8f5" stroke-width="3.4"/><path d="M466.0,490.0 L476.0,494.0" fill="none" stroke="#c2d8f5" stroke-width="3.4"/><path d="M468.0,501.0 L478.0,505.0" fill="none" stroke="#c2d8f5" stroke-width="3.4"/><path d="M484.8,484.5 L490.5,490.5" fill="none" stroke="#c2d8f5" stroke-width="3.4"/><path d="M499,476.5 L505.5,481.5" fill="none" stroke="#c2d8f5" stroke-width="3.4"/><path d="M510.5,469 L517,474.8" fill="none" stroke="#c2d8f5" stroke-width="3.4"/></g><path d="M466.5,462.2 L527,437.5 Q535,434.5 539.5,441 L543.8,452 Q545,455 544.9,460 L544.7,476.3 Q544.5,481.5 539.8,483.5 L484,509.5 Q478.5,511 478.2,505 L478.4,490 Q472,487 469,481 Q465,472 466.5,462.2 Z" fill="none" stroke="#22386e" stroke-width="1.15"/><path d="M478.3,472.4 A2.3,2.0 0 1 1 482.9,472.4 A2.3,2.0 0 1 1 478.3,472.4 Z" fill="none" stroke="#22386e" stroke-width="1.15"/><path d="M497.6,459.0 A2.3,2.0 0 1 1 502.2,459.0 A2.3,2.0 0 1 1 497.6,459.0 Z" fill="none" stroke="#22386e" stroke-width="1.15"/><path d="M520.0,448.1 A2.3,2.0 0 1 1 524.6,448.1 A2.3,2.0 0 1 1 520.0,448.1 Z" fill="none" stroke="#22386e" stroke-width="1.15"/><path d="M446,496 Q450,490 458,492 Q466,496 462,502" fill="none" stroke="#5a76b0" stroke-width="0.7"/><path d="M449,499 Q452,494 457,495 Q462,498 460,502" fill="none" stroke="#5a76b0" stroke-width="0.7"/><path d="M462,466 Q462,456 474,451 L522,431 Q534,427 540,436 L546,448" fill="none" stroke="#5a76b0" stroke-width="0.7"/><path d="M479.4,486.5 L539.6,454.5" fill="none" stroke="#5a76b0" stroke-width="0.7"/><path d="M483,492 L537,463.5 Q540.5,462 540.5,466 L540.5,475.5 Q540.5,479 537,480.5 L486,504" fill="none" stroke="#5a76b0" stroke-width="0.7"/><path d="M466.0,490.0 L476.0,494.0" fill="none" stroke="#5a76b0" stroke-width="0.7"/><path d="M468.0,501.0 L478.0,505.0" fill="none" stroke="#5a76b0" stroke-width="0.7"/><path d="M484.8,484.5 L490.5,490.5" fill="none" stroke="#22386e" stroke-width="1.9"/><path d="M499,476.5 L505.5,481.5" fill="none" stroke="#22386e" stroke-width="1.9"/><path d="M510.5,469 L517,474.8" fill="none" stroke="#22386e" stroke-width="1.9"/></g>
<g stroke-linejoin="round" stroke-linecap="round"><path d="M435.7,452.0 L454.5,447.2 L470.2,469.2 L460.8,492.7 L435.7,493.5 L434.0,475.0 Z" fill="#fbfdff" stroke="none"/><g filter="url(#glw2)"><path d="M435.7,452.0 L454.5,447.2 L470.2,469.2 L460.8,492.7 L435.7,493.5 L434.0,475.0 Z" fill="none" stroke="#c2d8f5" stroke-width="3.4"/><path d="M440.0,452.0 L437.0,470.0 L436.0,490.0" fill="none" stroke="#c2d8f5" stroke-width="3.4"/></g><path d="M435.7,452.0 L454.5,447.2 L470.2,469.2 L460.8,492.7 L435.7,493.5 L434.0,475.0 Z" fill="none" stroke="#22386e" stroke-width="1.15"/><path d="M440.0,452.0 L437.0,470.0 L436.0,490.0" fill="none" stroke="#5a76b0" stroke-width="0.7"/></g>
<g stroke-linejoin="round" stroke-linecap="round"><path d="M388.8,474.9 Q389.8,468.9 395.8,468.9 Q401.8,470.9 401.8,476.9 Q400.8,482.9 394.8,482.9 Q387.8,480.9 388.8,474.9 Z" fill="#fbfdff" stroke="none"/><path d="M433,448.7 Q434,442.7 440,442.7 Q446,444.7 446,450.7 Q445,456.7 439,456.7 Q432,454.7 433,448.7 Z" fill="#fbfdff" stroke="none"/><path d="M476.8,423.1 Q477.8,417.1 483.8,417.1 Q489.8,419.1 489.8,425.1 Q488.8,431.1 482.8,431.1 Q475.8,429.1 476.8,423.1 Z" fill="#fbfdff" stroke="none"/><path d="M521,398.2 Q522,392.2 528,392.2 Q534,394.2 534,400.2 Q533,406.2 527,406.2 Q520,404.2 521,398.2 Z" fill="#fbfdff" stroke="none"/><g filter="url(#glw2)"><path d="M388.8,474.9 Q389.8,468.9 395.8,468.9 Q401.8,470.9 401.8,476.9 Q400.8,482.9 394.8,482.9 Q387.8,480.9 388.8,474.9 Z" fill="none" stroke="#c2d8f5" stroke-width="3.4"/><path d="M433,448.7 Q434,442.7 440,442.7 Q446,444.7 446,450.7 Q445,456.7 439,456.7 Q432,454.7 433,448.7 Z" fill="none" stroke="#c2d8f5" stroke-width="3.4"/><path d="M476.8,423.1 Q477.8,417.1 483.8,417.1 Q489.8,419.1 489.8,425.1 Q488.8,431.1 482.8,431.1 Q475.8,429.1 476.8,423.1 Z" fill="none" stroke="#c2d8f5" stroke-width="3.4"/><path d="M521,398.2 Q522,392.2 528,392.2 Q534,394.2 534,400.2 Q533,406.2 527,406.2 Q520,404.2 521,398.2 Z" fill="none" stroke="#c2d8f5" stroke-width="3.4"/><path d="M393.8,476.4 A3,3.5 0 1 1 399.8,476.4 A3,3.5 0 1 1 393.8,476.4 Z" fill="none" stroke="#c2d8f5" stroke-width="3.4"/><path d="M438.0,450.2 A3,3.5 0 1 1 444.0,450.2 A3,3.5 0 1 1 438.0,450.2 Z" fill="none" stroke="#c2d8f5" stroke-width="3.4"/><path d="M481.8,424.6 A3,3.5 0 1 1 487.8,424.6 A3,3.5 0 1 1 481.8,424.6 Z" fill="none" stroke="#c2d8f5" stroke-width="3.4"/><path d="M526.0,399.7 A3,3.5 0 1 1 532.0,399.7 A3,3.5 0 1 1 526.0,399.7 Z" fill="none" stroke="#c2d8f5" stroke-width="3.4"/></g><path d="M388.8,474.9 Q389.8,468.9 395.8,468.9 Q401.8,470.9 401.8,476.9 Q400.8,482.9 394.8,482.9 Q387.8,480.9 388.8,474.9 Z" fill="none" stroke="#22386e" stroke-width="1.15"/><path d="M433,448.7 Q434,442.7 440,442.7 Q446,444.7 446,450.7 Q445,456.7 439,456.7 Q432,454.7 433,448.7 Z" fill="none" stroke="#22386e" stroke-width="1.15"/><path d="M476.8,423.1 Q477.8,417.1 483.8,417.1 Q489.8,419.1 489.8,425.1 Q488.8,431.1 482.8,431.1 Q475.8,429.1 476.8,423.1 Z" fill="none" stroke="#22386e" stroke-width="1.15"/><path d="M521,398.2 Q522,392.2 528,392.2 Q534,394.2 534,400.2 Q533,406.2 527,406.2 Q520,404.2 521,398.2 Z" fill="none" stroke="#22386e" stroke-width="1.15"/><path d="M393.8,476.4 A3,3.5 0 1 1 399.8,476.4 A3,3.5 0 1 1 393.8,476.4 Z" fill="none" stroke="#5a76b0" stroke-width="0.7"/><path d="M438.0,450.2 A3,3.5 0 1 1 444.0,450.2 A3,3.5 0 1 1 438.0,450.2 Z" fill="none" stroke="#5a76b0" stroke-width="0.7"/><path d="M481.8,424.6 A3,3.5 0 1 1 487.8,424.6 A3,3.5 0 1 1 481.8,424.6 Z" fill="none" stroke="#5a76b0" stroke-width="0.7"/><path d="M526.0,399.7 A3,3.5 0 1 1 532.0,399.7 A3,3.5 0 1 1 526.0,399.7 Z" fill="none" stroke="#5a76b0" stroke-width="0.7"/></g>
<g stroke-linejoin="round" stroke-linecap="round"><path d="M453,566.3 Q447,572 447.4,590 Q448,604 458.5,608.9 L478.9,610.7 L545,580 L545,552 Q538,534 517.8,536.7 Z" fill="#fbfdff" stroke="none"/><path d="M453,566.3 L517.8,536.7 Q530,533 538,545 L543.5,551 Q545.6,553 545.6,557 L545.6,575 Q545.6,579.5 541,581.5 L484,608 Q479,610 478.8,604 L477.5,586 Q460,580 453,566.3 Z" fill="#fbfdff" stroke="none"/><g filter="url(#glw2)"><path d="M453,566.3 Q447,572 447.4,590 Q448,604 458.5,608.9 L478.9,610.7" fill="none" stroke="#c2d8f5" stroke-width="3.4"/><path d="M453,566.3 L517.8,536.7 Q530,533 538,545 L543.5,551 Q545.6,553 545.6,557 L545.6,575 Q545.6,579.5 541,581.5 L484,608 Q479,610 478.8,604 L477.5,586 Q460,580 453,566.3 Z" fill="none" stroke="#c2d8f5" stroke-width="3.4"/><path d="M478.3,570.0 A2.4,2.1 0 1 1 483.1,570.0 A2.4,2.1 0 1 1 478.3,570.0 Z" fill="none" stroke="#c2d8f5" stroke-width="3.4"/><path d="M496.9,557.0 A2.4,2.1 0 1 1 501.7,557.0 A2.4,2.1 0 1 1 496.9,557.0 Z" fill="none" stroke="#c2d8f5" stroke-width="3.4"/><path d="M519.1,546.0 A2.4,2.1 0 1 1 523.9,546.0 A2.4,2.1 0 1 1 519.1,546.0 Z" fill="none" stroke="#c2d8f5" stroke-width="3.4"/><path d="M457,570 Q452,576 452,590 Q453,600 461,604 L476,606" fill="none" stroke="#c2d8f5" stroke-width="3.4"/><path d="M477.5,584 L541,551.5" fill="none" stroke="#c2d8f5" stroke-width="3.4"/><path d="M481.5,588 L537,559 Q541,557 541,561 L541,573 Q541,576 537,578 L485,602" fill="none" stroke="#c2d8f5" stroke-width="3.4"/><path d="M460.0,588.0 L472.0,591.0" fill="none" stroke="#c2d8f5" stroke-width="3.4"/><path d="M460.0,598.0 L472.0,602.0" fill="none" stroke="#c2d8f5" stroke-width="3.4"/><path d="M467,562 Q469,558 472,560" fill="none" stroke="#c2d8f5" stroke-width="3.4"/><path d="M487,553 Q489,549 492,551" fill="none" stroke="#c2d8f5" stroke-width="3.4"/><path d="M508,544 Q510,540 513,542" fill="none" stroke="#c2d8f5" stroke-width="3.4"/><path d="M485.5,582.5 L489.5,589.5" fill="none" stroke="#c2d8f5" stroke-width="3.4"/><path d="M502,575 L505.5,581" fill="none" stroke="#c2d8f5" stroke-width="3.4"/><path d="M513.5,568.5 L517,574.5" fill="none" stroke="#c2d8f5" stroke-width="3.4"/></g><path d="M453,566.3 Q447,572 447.4,590 Q448,604 458.5,608.9 L478.9,610.7" fill="none" stroke="#22386e" stroke-width="1.15"/><path d="M453,566.3 L517.8,536.7 Q530,533 538,545 L543.5,551 Q545.6,553 545.6,557 L545.6,575 Q545.6,579.5 541,581.5 L484,608 Q479,610 478.8,604 L477.5,586 Q460,580 453,566.3 Z" fill="none" stroke="#22386e" stroke-width="1.15"/><path d="M478.3,570.0 A2.4,2.1 0 1 1 483.1,570.0 A2.4,2.1 0 1 1 478.3,570.0 Z" fill="none" stroke="#22386e" stroke-width="1.15"/><path d="M496.9,557.0 A2.4,2.1 0 1 1 501.7,557.0 A2.4,2.1 0 1 1 496.9,557.0 Z" fill="none" stroke="#22386e" stroke-width="1.15"/><path d="M519.1,546.0 A2.4,2.1 0 1 1 523.9,546.0 A2.4,2.1 0 1 1 519.1,546.0 Z" fill="none" stroke="#22386e" stroke-width="1.15"/><path d="M457,570 Q452,576 452,590 Q453,600 461,604 L476,606" fill="none" stroke="#5a76b0" stroke-width="0.7"/><path d="M477.5,584 L541,551.5" fill="none" stroke="#5a76b0" stroke-width="0.7"/><path d="M481.5,588 L537,559 Q541,557 541,561 L541,573 Q541,576 537,578 L485,602" fill="none" stroke="#5a76b0" stroke-width="0.7"/><path d="M460.0,588.0 L472.0,591.0" fill="none" stroke="#5a76b0" stroke-width="0.7"/><path d="M460.0,598.0 L472.0,602.0" fill="none" stroke="#5a76b0" stroke-width="0.7"/><path d="M467,562 Q469,558 472,560" fill="none" stroke="#5a76b0" stroke-width="0.7"/><path d="M487,553 Q489,549 492,551" fill="none" stroke="#5a76b0" stroke-width="0.7"/><path d="M508,544 Q510,540 513,542" fill="none" stroke="#5a76b0" stroke-width="0.7"/><path d="M485.5,582.5 L489.5,589.5" fill="none" stroke="#22386e" stroke-width="1.9"/><path d="M502,575 L505.5,581" fill="none" stroke="#22386e" stroke-width="1.9"/><path d="M513.5,568.5 L517,574.5" fill="none" stroke="#22386e" stroke-width="1.9"/></g>
<g stroke-linejoin="round" stroke-linecap="round"><g filter="url(#glw2)"><path d="M536.3,531.1 Q552,536 560,552 Q568,570 563,580 Q558,588 540,583 L532.6,581" fill="none" stroke="#c2d8f5" stroke-width="3.4"/><path d="M538,536 Q551,544 555,556 Q561,572 556,578" fill="none" stroke="#c2d8f5" stroke-width="3.4"/></g><path d="M536.3,531.1 Q552,536 560,552 Q568,570 563,580 Q558,588 540,583 L532.6,581" fill="none" stroke="#22386e" stroke-width="1.15"/><path d="M538,536 Q551,544 555,556 Q561,572 556,578" fill="none" stroke="#5a76b0" stroke-width="0.7"/></g>
<g stroke-linejoin="round" stroke-linecap="round"><path d="M432.7,598.5 Q436,595 440,599 L459.8,615.6 Q468,620 470.5,628 Q471,634 465,636.5 L459.8,636.9 L432.7,624 Z" fill="#fbfdff" stroke="none"/><g filter="url(#glw2)"><path d="M432.7,598.5 Q436,595 440,599 L459.8,615.6 Q468,620 470.5,628 Q471,634 465,636.5 L459.8,636.9 L432.7,624 Z" fill="none" stroke="#c2d8f5" stroke-width="3.4"/><path d="M435.4,602.7 L435.6,622.7" fill="none" stroke="#c2d8f5" stroke-width="3.4"/></g><path d="M432.7,598.5 Q436,595 440,599 L459.8,615.6 Q468,620 470.5,628 Q471,634 465,636.5 L459.8,636.9 L432.7,624 Z" fill="none" stroke="#22386e" stroke-width="1.15"/><path d="M435.4,602.7 L435.6,622.7" fill="none" stroke="#5a76b0" stroke-width="0.7"/></g>
<text x="0" y="0" transform="translate(399,552.5) rotate(90)" font-size="8.5" font-weight="bold" fill="#3a5590" font-family="Liberation Sans" textLength="38.5" lengthAdjust="spacingAndGlyphs">SEMS</text>
<path d="M370.6,659.8 L406,677" stroke="#555" stroke-width="0.7"/>
<path d="M441,391 L441,425" stroke="#666" stroke-width="0.7"/>
<circle cx="440" cy="380.6" r="10.6" fill="#bccde6" stroke="#b0c4e2" stroke-width="0.8"/>
<path d="M437.2,379.6 L440.6,377.2 L440.6,385.9" fill="none" stroke="#1c2c50" stroke-width="1.5" stroke-linejoin="miter"/>
<path d="M407.2,681.4 Q411,677 416.6,676 Q419,676 420.6,679.1 Q426,681 427.2,687.6 Q427,694 420,697.3 Q416,698 414.4,696.2 L408.1,693.9 Q405,690 407.2,681.4 Z" stroke="#2a2a2a" stroke-width="1.2" fill="#fff"/>
<ellipse cx="421.2" cy="689.9" rx="5.5" ry="7" transform="rotate(25 421.2 689.9)" stroke="#2a2a2a" stroke-width="1" fill="#fff"/>
<ellipse cx="421.8" cy="690.2" rx="2.8" ry="3.8" transform="rotate(25 421.8 690.2)" stroke="#333" stroke-width="0.8" fill="none"/>
<path d="M409.2,685.9 L415.5,688.8 M411,678 L417,684" stroke="#555" stroke-width="0.8" fill="none"/>
<path d="M406.4,702 L412.1,696.2" stroke="#555" stroke-width="0.7" fill="none"/>
</svg>
<div class="t" style="left:607px;top:45px;height:17px;line-height:17px;color:#000;transform-origin:0 50%;">П..</div>
<div class="t" style="left:637px;top:45px;height:17px;line-height:17px;color:#000;transform-origin:0 50%;">К...</div>
<div class="t" style="left:670px;top:45px;height:17px;line-height:17px;color:#000;transform-origin:0 50%;">Номе...</div>
<div class="t" style="left:724.5px;top:45px;height:17px;line-height:17px;color:#000;transform-origin:0 50%;">А</div>
<div class="t" style="left:743.5px;top:45px;height:17px;line-height:17px;color:#000;transform-origin:0 50%;">Обозначение</div>
<div class="t" style="left:896px;top:45px;height:17px;line-height:17px;color:#000;transform-origin:0 50%;">Д...</div>
<div class="t" style="right:298px;top:64px;height:17px;line-height:17px;color:#fff;transform-origin:100% 50%;">1</div>
<div class="t" style="right:211.5px;top:64px;height:17px;line-height:17px;color:#fff;transform-origin:100% 50%;">2054100</div>
<div class="t" style="right:188.5px;top:64px;height:17px;line-height:17px;color:#fff;transform-origin:100% 50%;">1</div>
<div class="t" style="left:740.5px;top:64px;height:17px;line-height:17px;color:#fff;transform-origin:0 50%;">ECU AWD</div>
<div class="t" style="left:638.5px;top:81px;height:17px;line-height:17px;color:#000;transform-origin:0 50%;">E65</div>
<div class="t" style="right:297.5px;top:98px;height:17px;line-height:17px;color:#000;transform-origin:100% 50%;">2</div>
<div class="t" style="right:211.5px;top:98px;height:17px;line-height:17px;color:#000;transform-origin:100% 50%;">2544567</div>
<div class="t" style="right:188.5px;top:98px;height:17px;line-height:17px;color:#000;transform-origin:100% 50%;">1</div>
<div class="t" style="left:740.5px;top:98px;height:17px;line-height:17px;color:#000;transform-origin:0 50%;">Кронштейн</div>
<div class="t" style="left:842.5px;top:98px;height:17px;line-height:17px;color:#000;transform-origin:0 50%;">Сборка</div>
<div class="t" style="right:297.5px;top:115px;height:17px;line-height:17px;color:#000;transform-origin:100% 50%;">3</div>
<div class="t" style="right:211.5px;top:115px;height:17px;line-height:17px;color:#000;transform-origin:100% 50%;">377647</div>
<div class="t" style="right:188.5px;top:115px;height:17px;line-height:17px;color:#000;transform-origin:100% 50%;">4</div>
<div class="t" style="left:740.5px;top:115px;height:17px;line-height:17px;color:#000;transform-origin:0 50%;">Гайка</div>
<div class="t" style="left:893px;top:115px;height:17px;line-height:17px;color:#000;transform-origin:0 50%;">M8</div>
<div class="t" style="right:297.5px;top:132px;height:17px;line-height:17px;color:#000;transform-origin:100% 50%;">4</div>
<div class="t" style="right:211.5px;top:132px;height:17px;line-height:17px;color:#000;transform-origin:100% 50%;">815133</div>
<div class="t" style="right:188.5px;top:132px;height:17px;line-height:17px;color:#000;transform-origin:100% 50%;">1</div>
<div class="t" style="left:740.5px;top:132px;height:17px;line-height:17px;color:#000;transform-origin:0 50%;">Фланцевая гайка</div>
<div class="t" style="left:893px;top:132px;height:17px;line-height:17px;color:#000;transform-origin:0 50%;">M10</div>
</body></html>
